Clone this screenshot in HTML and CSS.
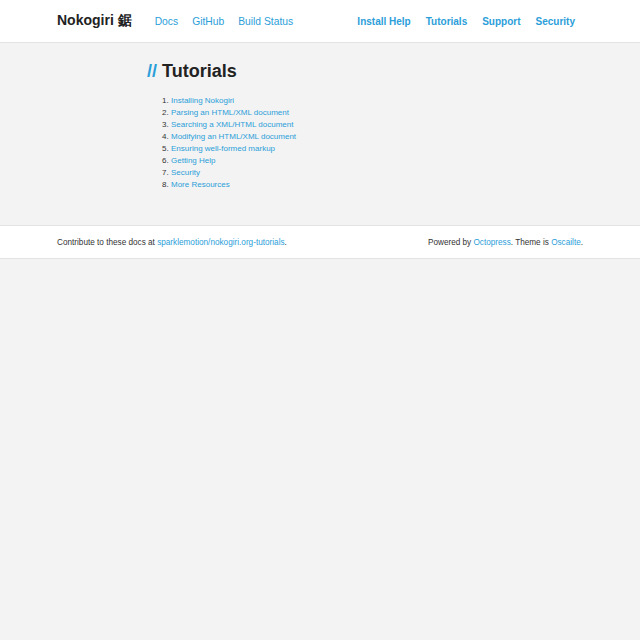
FILE: index.html
```html
<!DOCTYPE html>
<html lang="en">
<head>
<meta charset="utf-8">
<title>Tutorials - Nokogiri</title>
<link rel="stylesheet" href="styles.css">
</head>
<body>
<header class="site-header">
  <div class="container header-inner">
    <div class="brand-group">
      <a class="brand" href="#">Nokogiri 鋸</a>
      <nav class="nav-left">
        <a href="#">Docs</a>
        <a href="#">GitHub</a>
        <a href="#">Build Status</a>
      </nav>
    </div>
    <nav class="nav-right">
      <a href="#">Install Help</a>
      <a href="#">Tutorials</a>
      <a href="#">Support</a>
      <a href="#">Security</a>
    </nav>
  </div>
</header>
<main class="main">
  <div class="content">
    <h1 class="page-title"><span class="slashes">//</span> Tutorials</h1>
    <ol class="tutorial-list">
      <li><a href="#">Installing Nokogiri</a></li>
      <li><a href="#">Parsing an HTML/XML document</a></li>
      <li><a href="#">Searching a XML/HTML document</a></li>
      <li><a href="#">Modifying an HTML/XML document</a></li>
      <li><a href="#">Ensuring well-formed markup</a></li>
      <li><a href="#">Getting Help</a></li>
      <li><a href="#">Security</a></li>
      <li><a href="#">More Resources</a></li>
    </ol>
  </div>
</main>
<footer class="site-footer">
  <div class="container footer-inner">
    <p>Contribute to these docs at <a href="#">sparklemotion/nokogiri.org-tutorials</a>.</p>
    <p>Powered by <a href="#">Octopress</a>. Theme is <a href="#">Oscailte</a>.</p>
  </div>
</footer>
</body>
</html>
```
FILE: styles.css
```css
html, body {
  margin: 0;
  padding: 0;
}
body {
  background: #f3f3f3;
  font-family: "Liberation Sans", Arial, sans-serif;
  color: #222;
  min-height: 640px;
}
a {
  color: #2b9ed9;
  text-decoration: none;
}
.container {
  width: 526px;
  margin: 0 auto;
}
.site-header {
  background: #fff;
  border-bottom: 1px solid #e3e3e3;
  height: 42px;
}
.header-inner {
  display: flex;
  align-items: center;
  justify-content: space-between;
  height: 42px;
}
.brand-group {
  display: flex;
  align-items: center;
}
.brand {
  color: #222;
  font-weight: bold;
  font-size: 14px;
  margin-right: 23px;
}
.nav-left {
  display: flex;
  gap: 14px;
  font-size: 10.3px;
}
.nav-right {
  display: flex;
  gap: 15px;
  font-size: 10px;
  font-weight: bold;
  padding-right: 8px;
  padding-top: 1px;
}
.main {
  padding: 17px 0 34px 147px;
}
.page-title {
  margin: 0;
  font-size: 18px;
  font-weight: bold;
  line-height: 22px;
  color: #222;
}
.slashes {
  color: #2b9ed9;
}
.tutorial-list {
  margin: 13px 0 0 0;
  padding-left: 24px;
  font-size: 8px;
  line-height: 12px;
  color: #333;
}
.site-footer {
  background: #fff;
  border-top: 1px solid #e3e3e3;
  border-bottom: 1px solid #e3e3e3;
}
.footer-inner {
  display: flex;
  justify-content: space-between;
  align-items: center;
  height: 32px;
  font-size: 8.2px;
  color: #333;
}
.footer-inner p {
  margin: 0;
}
```
